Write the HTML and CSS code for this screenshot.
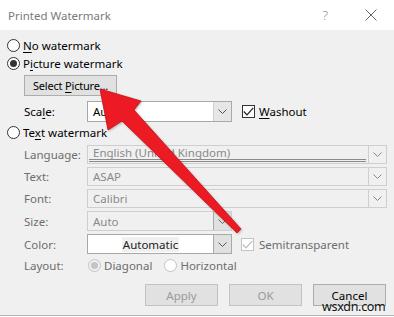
FILE: index.html
```html
<!DOCTYPE html>
<html lang="en">

<head>
  <meta charset="UTF-8">
  <meta name="viewport" content="width=device-width, initial-scale=1.0">
  <title>Printed Watermark</title>
  <link rel="stylesheet" href="styles.css">
</head>

<body>

  <div class="dialog">
    <div class="titlebar">
      <span class="title">Printed Watermark</span>
      <span class="help">?</span>
      <svg class="close" width="12" height="12" viewBox="0 0 12 12">
        <path d="M0.5 0.5 L11.5 11.5 M11.5 0.5 L0.5 11.5" stroke="#666" stroke-width="1" fill="none"/>
      </svg>
    </div>

    <div class="content">
      <div class="radio-row first">
        <span class="radio"></span>
        <span><u>N</u>o watermark</span>
      </div>
      <div class="radio-row">
        <span class="radio checked"></span>
        <span>P<u>i</u>cture watermark</span>
      </div>

      <div class="indent">
        <button class="btn select-btn">Select <u>P</u>icture...</button>
      </div>

      <div class="field-row scale-row">
        <span class="label">Sca<u>l</u>e:</span>
        <div class="combo short">
          <span class="combo-text">Auto</span>
          <span class="combo-arrow"><svg width="9" height="5" viewBox="0 0 9 5"><path d="M0.5 0.5 L4.5 4.5 L8.5 0.5" stroke="#555" fill="none"/></svg></span>
        </div>
        <span class="check checked"><svg width="11" height="9" viewBox="0 0 11 9"><path d="M0.8 4.5 L4 7.8 L10.3 0.8" stroke="#222" stroke-width="1.2" fill="none"/></svg></span>
        <span class="check-label"><u>W</u>ashout</span>
      </div>

      <div class="radio-row text-wm">
        <span class="radio"></span>
        <span>Te<u>x</u>t watermark</span>
      </div>

      <div class="field-row first-field">
        <span class="label muted">Language:</span>
        <div class="combo long disabled">
          <span class="combo-text underlined">English (United Kingdom)</span>
          <span class="combo-arrow"><svg width="9" height="5" viewBox="0 0 9 5"><path d="M0.5 0.5 L4.5 4.5 L8.5 0.5" stroke="#888" fill="none"/></svg></span>
        </div>
      </div>

      <div class="field-row">
        <span class="label muted">Text:</span>
        <div class="combo long disabled">
          <span class="combo-text">ASAP</span>
          <span class="combo-arrow"><svg width="9" height="5" viewBox="0 0 9 5"><path d="M0.5 0.5 L4.5 4.5 L8.5 0.5" stroke="#888" fill="none"/></svg></span>
        </div>
      </div>

      <div class="field-row">
        <span class="label muted">Font:</span>
        <div class="combo long disabled">
          <span class="combo-text">Calibri</span>
          <span class="combo-arrow"><svg width="9" height="5" viewBox="0 0 9 5"><path d="M0.5 0.5 L4.5 4.5 L8.5 0.5" stroke="#888" fill="none"/></svg></span>
        </div>
      </div>

      <div class="field-row tall">
        <span class="label muted">Size:</span>
        <div class="combo short disabled">
          <span class="combo-text">Auto</span>
          <span class="combo-arrow boxed"><svg width="9" height="5" viewBox="0 0 9 5"><path d="M0.5 0.5 L4.5 4.5 L8.5 0.5" stroke="#666" fill="none"/></svg></span>
        </div>
      </div>

      <div class="field-row tall">
        <span class="label muted">Color:</span>
        <div class="combo short color-combo">
          <span class="combo-text centered"><span class="swatch-text">Automatic</span></span>
          <span class="combo-arrow boxed"><svg width="9" height="5" viewBox="0 0 9 5"><path d="M0.5 0.5 L4.5 4.5 L8.5 0.5" stroke="#555" fill="none"/></svg></span>
        </div>
        <span class="check disabled"><svg width="11" height="9" viewBox="0 0 11 9"><path d="M0.8 4.5 L4 7.8 L10.3 0.8" stroke="#bbb" stroke-width="1.2" fill="none"/></svg></span>
        <span class="check-label muted">Semitransparent</span>
      </div>

      <div class="field-row layout-row">
        <span class="label muted">Layout:</span>
        <span class="radio disabled checked"></span>
        <span class="muted radio-text">Diagonal</span>
        <span class="radio disabled"></span>
        <span class="muted radio-text">Horizontal</span>
      </div>

      <div class="buttons">
        <button class="btn disabled">Apply</button>
        <button class="btn disabled">OK</button>
        <button class="btn">Cancel</button>
      </div>
    </div>
  </div>

  <!-- annotation drawn over the dialog -->
  <svg class="arrow" width="394" height="317" viewBox="0 0 394 317">
    <polygon points="100,89 141,101 134,110 241,229 237,233 122,121 108,130" fill="#ec1a22" stroke="#c40d14" stroke-width="0.8" stroke-linejoin="round"/>
  </svg>
  <span class="site-mark">wsxdn.com</span>

</body>

</html>
```

FILE: styles.css
```css
body {
  font-family: 'Segoe UI', 'Noto Sans', sans-serif;
  font-size: 11.5px;
  margin: 0;
  padding: 0;
  background-color: #ffffff;
  color: #000;
}

.dialog {
  width: 394px;
  height: 317px;
  position: relative;
  overflow: hidden;
}

.titlebar {
  height: 30px;
  display: flex;
  align-items: center;
  background-color: #ffffff;
}

.title {
  padding-left: 8px;
  color: #7a7a7a;
  font-size: 11.5px;
  flex: 1;
}

.help {
  color: #8a8a8a;
  font-size: 13px;
  font-weight: 300;
  margin-right: 37px;
}

.close {
  margin-right: 17px;
}

.content {
  background-color: #f0f0f0;
  height: 286px;
  border-bottom: 1px solid #b4b4b4;
  box-sizing: border-box;
}

u {
  text-decoration-thickness: 1px;
  text-underline-offset: 2px;
}

.radio-row {
  display: flex;
  align-items: center;
  height: 18px;
  padding-left: 7px;
}

.radio-row.first {
  padding-top: 6px;
}

.radio-row.text-wm {
  margin-top: 1px;
}

.radio {
  width: 13px;
  height: 13px;
  box-sizing: border-box;
  border: 1px solid #333;
  border-radius: 50%;
  background-color: #fff;
  margin-right: 3px;
  display: flex;
  align-items: center;
  justify-content: center;
  flex-shrink: 0;
}

.radio.checked::after {
  content: '';
  width: 7px;
  height: 7px;
  border-radius: 50%;
  background-color: #333;
}

.radio.disabled {
  border-color: #c4c4c4;
  background-color: #fff;
}

.radio.disabled.checked {
  background-color: #f0f0f0;
}

.radio.disabled.checked::after {
  background-color: #c4c4c4;
}

.indent {
  padding-left: 24px;
  margin-top: 3px;
}

.btn {
  font-family: inherit;
  font-size: 11.5px;
  height: 22px;
  box-sizing: border-box;
  border: 1px solid #adadad;
  background-color: #e1e1e1;
  color: #000;
  padding: 0;
}

.select-btn {
  width: 93px;
  height: 21px;
  font-size: 11px;
  letter-spacing: -0.2px;
}

.field-row {
  display: flex;
  align-items: center;
  padding-left: 24px;
  margin-top: 3px;
  height: 19px;
}

.field-row.scale-row {
  margin-top: 5px;
  height: 21px;
}

.field-row.first-field {
  margin-top: 4px;
}

.field-row.tall {
  height: 20px;
}

.label {
  width: 63px;
  flex-shrink: 0;
}

.muted {
  color: #6d6d6d;
}

.combo {
  display: flex;
  height: 100%;
  box-sizing: border-box;
  border: 1px solid #a8a8a8;
  background-color: #fff;
}

.combo.short {
  width: 145px;
}

.combo.long {
  width: 300px;
}

.combo.disabled {
  border-color: #cfcfcf;
  background-color: #f0f0f0;
  color: #8a8a8a;
}

.combo-text {
  flex: 1;
  padding-left: 5px;
  display: flex;
  align-items: center;
  overflow: hidden;
  white-space: nowrap;
}

.combo-text.underlined {
  overflow: visible;
  line-height: 12px;
  align-items: flex-end;
  margin: 0 2px 1px 1px;
  padding-left: 4px;
  border-bottom: 3px double #8a8a8a;
}

.combo-text.centered {
  justify-content: center;
  padding-left: 0;
}

.swatch-text {
  background-color: #f0f0f0;
  color: #222;
  padding: 0 1px;
}

.combo-arrow {
  width: 17px;
  display: flex;
  align-items: center;
  justify-content: center;
  background-color: #e6e6e6;
  border-left: 1px solid #cfcfcf;
}

.combo.disabled .combo-arrow {
  background-color: #f0f0f0;
  border-left: 1px solid #cfcfcf;
}

.combo-arrow.boxed,
.combo.disabled .combo-arrow.boxed {
  background-color: #e0e0e0;
  border-left: 1px solid #a8a8a8;
}

.check {
  width: 13px;
  height: 13px;
  box-sizing: border-box;
  border: 1px solid #333;
  background-color: #fff;
  margin-left: 10px;
  margin-right: 4px;
  display: flex;
  align-items: center;
  justify-content: center;
}

.check.disabled {
  border-color: #c4c4c4;
  margin-left: 9px;
  margin-right: 5px;
}

.layout-row {
  margin-top: 2px;
  height: 18px;
}

.layout-row .radio {
  margin-left: 1px;
  margin-right: 3px;
}

.radio-text {
  margin-right: 11px;
}

.buttons {
  display: flex;
  justify-content: flex-end;
  gap: 11px;
  padding-right: 8px;
  margin-top: 10px;
}

.buttons .btn {
  width: 73px;
}

.btn.disabled {
  background-color: #e1e1e1;
  border-color: #c2c2c2;
  color: #9a9a9a;
}

.arrow {
  position: absolute;
  top: 0;
  left: 0;
  pointer-events: none;
  filter: drop-shadow(1px 1px 1px rgba(0, 0, 0, 0.25));
}

.site-mark {
  position: absolute;
  left: 322px;
  top: 298px;
  font-family: 'Noto Sans', sans-serif;
  font-size: 12.5px;
  color: #111;
  letter-spacing: -0.3px;
}
```
